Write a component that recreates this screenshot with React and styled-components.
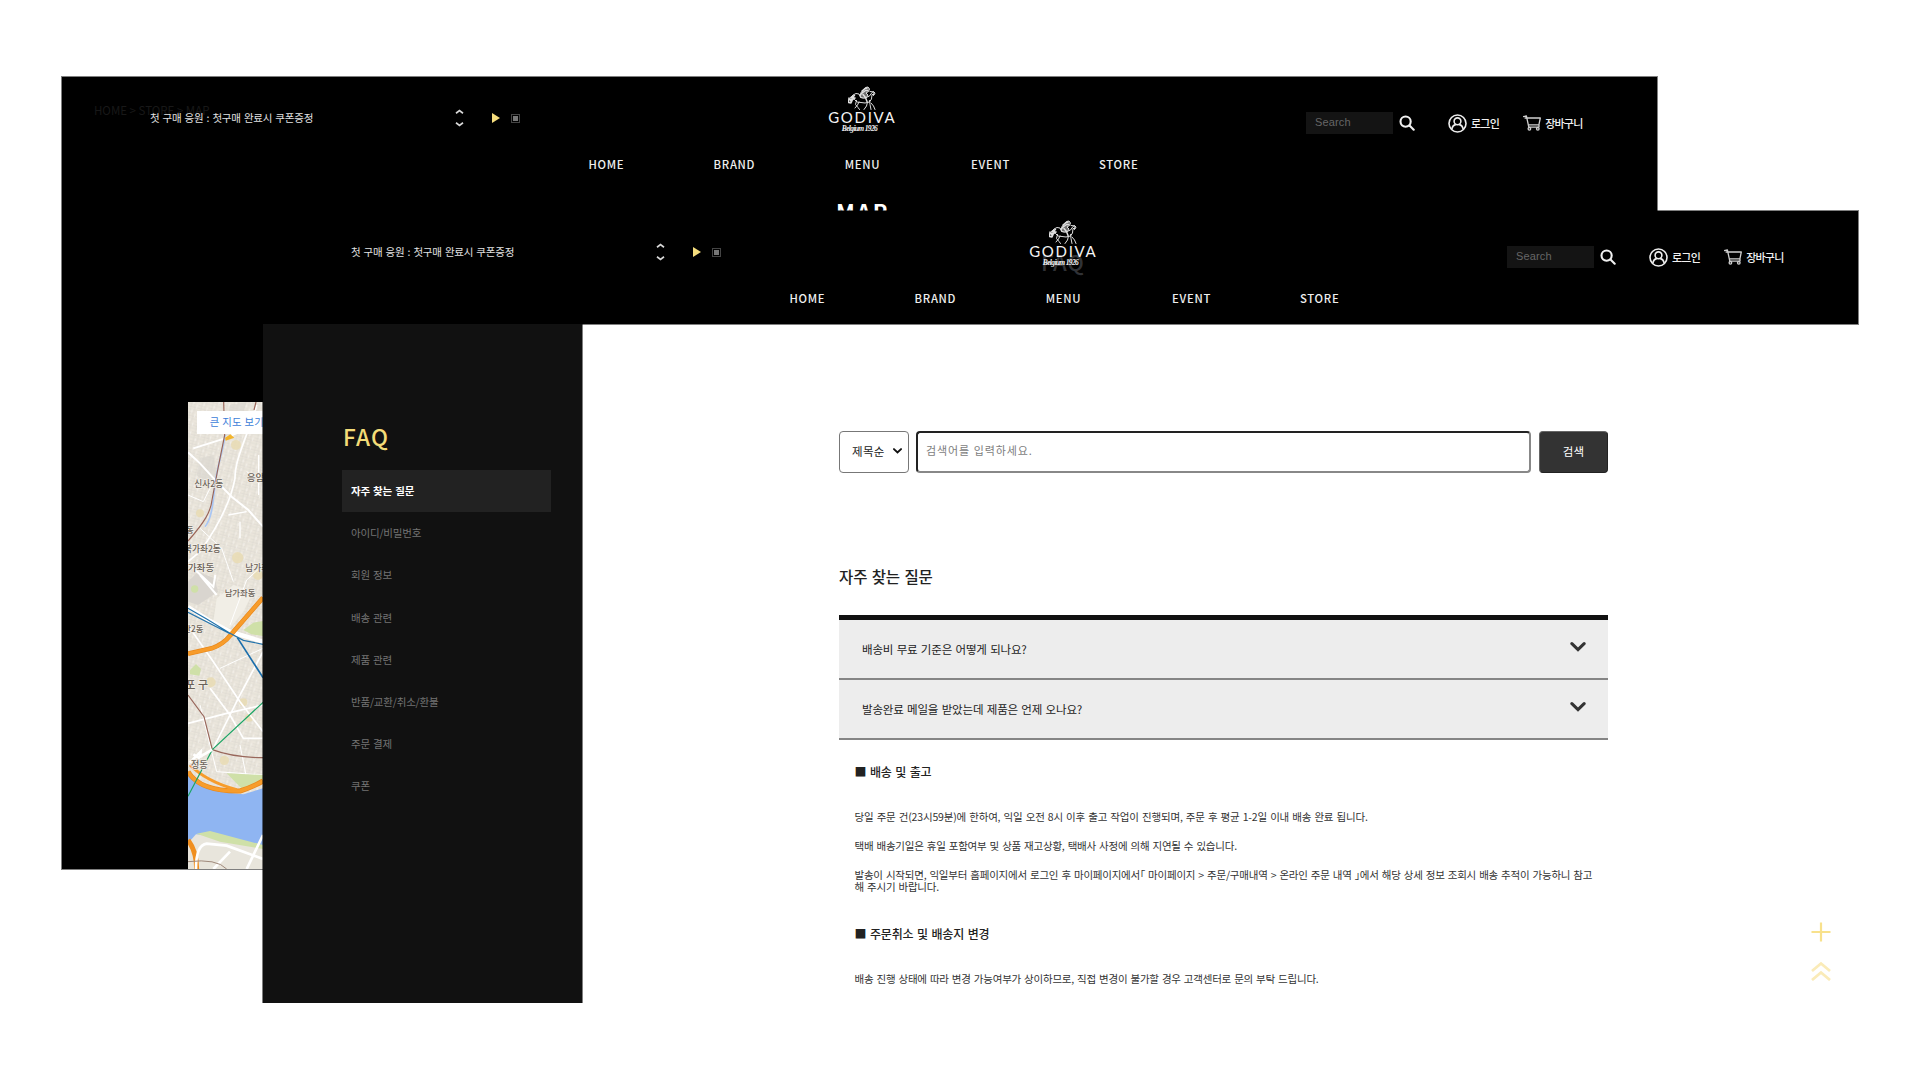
import React from "react";
import styled, { createGlobalStyle } from "styled-components";

const kr = `"Noto Sans CJK KR", "Open Sans", sans-serif`;

const Global = createGlobalStyle`
  * { box-sizing: border-box; }
  html, body { margin: 0; padding: 0; background: #fff; }
  body { font-family: ${kr}; overflow: hidden; }
  h1, h2, h3, p, ul { margin: 0; padding: 0; font-weight: inherit; }
  ul { list-style: none; }
`;

const Desktop = styled.div`
  position: relative;
  width: 1920px;
  height: 1080px;
  overflow: hidden;
  background: #fff;
`;

const Window = styled.section`
  position: absolute;
  left: ${(p) => p.$left}px;
  top: ${(p) => p.$top}px;
  width: 1595px;
  height: 792px;
  display: flex;
  flex-direction: column;
  background: ${(p) => p.$bg};
  box-shadow: ${(p) => (p.$edge ? "0 0 0 1px rgba(0,0,0,.5)" : "none")};
`;

/* ---------- site header ---------- */
const HeaderBar = styled.header`
  position: relative;
  flex: none;
  height: 113px;
  display: flex;
  flex-direction: column;
  background: #000;
  box-shadow: ${(p) => (p.$edge ? "0 0 0 1px rgba(0,0,0,.5)" : "none")};
`;

const TopRow = styled.div`
  position: relative;
  z-index: 1;
  display: flex;
  height: 75px;
`;

const Notice = styled.div`
  width: 743px;
  height: 82px;
  padding-left: 88px;
  display: flex;
  align-items: center;
`;

const NoticeText = styled.span`
  width: 305px;
  font-size: 10.5px;
  line-height: 16px;
  letter-spacing: -0.22px;
  word-spacing: 1px;
  color: #e2e2e2;
  white-space: nowrap;
`;

const Arrows = styled.div`
  width: 9px;
  margin-right: 28px;
  display: flex;
  flex-direction: column;
  gap: 8px;
  svg { display: block; }
`;

const Play = styled.i`
  width: 8px;
  height: 10px;
  margin-right: 11px;
  background: #f5dd7d;
  clip-path: polygon(0 0, 100% 50%, 0 100%);
`;

const Stop = styled.i`
  width: 9px;
  height: 9px;
  border: 1px solid #444;
  background: #777;
  background-clip: content-box;
  padding: 1px;
`;

const LogoBox = styled.div`
  width: 113px;
  padding-top: 9px;
  display: flex;
  flex-direction: column;
  align-items: center;
  color: #f4f4f4;
  svg { display: block; }
`;

const LogoName = styled.span`
  font: 400 15px/12px Lato, sans-serif;
  letter-spacing: 1.7px;
  margin: 0 -1.7px 0 0;
`;

const LogoSub = styled.span`
  font: italic 700 7.5px/8px "Liberation Serif", serif;
  letter-spacing: -0.65px;
  margin: 2px 4px 0 0;
`;

const Tools = styled.div`
  height: 92px;
  padding-left: 388px;
  display: flex;
  align-items: center;
  color: #f0f0f0;
  svg { display: block; flex: none; }
`;

const SearchField = styled.div`
  width: 87px;
  height: 22px;
  padding-left: 9px;
  margin-right: 6px;
  background: #141414;
  color: #666;
  font: 11px/20px "Liberation Sans", sans-serif;
  letter-spacing: 0.15px;
`;

const ToolLink = styled.span`
  display: flex;
  align-items: center;
  margin-left: ${(p) => p.$gap}px;
  font-size: 11px;
  font-weight: 500;
  line-height: 16px;
  letter-spacing: -0.75px;
  gap: 4px;
  white-space: nowrap;
`;

const Nav = styled.nav`
  display: flex;
  justify-content: center;
  padding-left: 6px;
  a {
    width: 128.1px;
    text-align: center;
    font: 500 11.3px/24px ${kr};
    letter-spacing: 0.7px;
    color: #efefef;
  }
`;

const GhostTitle = styled.span`
  position: absolute;
  left: ${(p) => p.$x}px;
  top: ${(p) => p.$y}px;
  font: ${(p) => p.$font} ${kr};
  letter-spacing: ${(p) => p.$ls || 0}px;
  color: ${(p) => p.$color};
  white-space: nowrap;
`;

function Horse() {
  return (
    <svg width="28" height="25" viewBox="0 0 56 50" fill="none" stroke="#dedede" strokeWidth="2" strokeLinecap="round" strokeLinejoin="round">
      <path d="M3 26l7-8 6-3 6 1 3 7 9 1 9-4 5-7 3-2 3 3-1 3-5 0-1 9-4 6-9 2-8-1-8-1-5-5" />
      <path d="M2 24l-1 9 5 1 3-7 5-3-8-1 7-4M5 30l6-9M4 27l5-2" strokeWidth="3" />
      <path d="M17 29l-2 8 5 6 3 4M22 32l-3 6-5 6M43 29l1 8 2 10M39 32l-2 8-5 7M46 34l5 6 3 7" />
      <path d="M25 22l1-9 5-5 4-5 5-1 3 4-2 5-5 3 4 4-3 5-6 1z" fill="#6f6f6f" />
      <path d="M28 10l6-5 4-1M27 15l8-6 4 0M24 18l5-5M30 17l5 6 3 8" strokeWidth="3" />
      <path d="M44 11l8 1-1 7" />
    </svg>
  );
}

function Caret({ up }) {
  return (
    <svg width="9" height="5" viewBox="0 0 9 5" fill="none" stroke="#d8d8d8" strokeWidth="1.7">
      <path d={up ? "M1 4.2L4.5 1.6 8 4.2" : "M1 .8L4.5 3.4 8 .8"} />
    </svg>
  );
}

function Header({ edge, children }) {
  return (
    <HeaderBar $edge={edge}>
      {children}
      <TopRow>
        <Notice>
          <NoticeText>첫 구매 응원 : 첫구매 완료시 쿠폰증정</NoticeText>
          <Arrows><Caret up /><Caret /></Arrows>
          <Play />
          <Stop />
        </Notice>
        <LogoBox>
          <Horse />
          <LogoName>GODIVA</LogoName>
          <LogoSub>Belgium 1926</LogoSub>
        </LogoBox>
        <Tools>
          <SearchField>Search</SearchField>
          <svg width="16" height="16" viewBox="0 0 16 16" fill="none" stroke="#f0f0f0" strokeWidth="2.1" strokeLinecap="round">
            <circle cx="6.6" cy="6.6" r="5.1" />
            <path d="M10.5 10.5l4.2 4.2" />
          </svg>
          <ToolLink $gap={33}>
            <svg width="19" height="19" viewBox="0 0 19 19" fill="none" stroke="#ededed" strokeWidth="1.6">
              <circle cx="9.5" cy="9.5" r="8.5" />
              <circle cx="9.5" cy="7.3" r="3.4" />
              <path d="M3.8 15.4c.5-3 2.4-4.6 4-4.8M15.2 15.4c-.5-3-2.4-4.6-4-4.8" />
            </svg>
            로그인
          </ToolLink>
          <ToolLink $gap={24}>
            <svg width="18" height="16" viewBox="0 0 18 16" fill="none" stroke="#cfcfcf" strokeWidth="1.3" strokeLinejoin="round">
              <path d="M0 1.6l3.4-.6 2.4 11.2H16M1.6 3H17.3l-1.4 6.8H5.4M16 9.8v2.4" />
              <circle cx="6.4" cy="13.8" r="1.3" />
              <circle cx="14.8" cy="13.8" r="1.3" />
            </svg>
            장바구니
          </ToolLink>
        </Tools>
      </TopRow>
      <Nav>
        {["HOME", "BRAND", "MENU", "EVENT", "STORE"].map((n) => <a key={n}>{n}</a>)}
      </Nav>
    </HeaderBar>
  );
}

/* ---------- store map window ---------- */
const MapPage = styled.div`
  flex: 1;
  display: flex;
  flex-direction: column;
  padding-left: 126px;
`;

const MapTitle = styled.h1`
  height: 212px;
  padding: 6px 0 0 648px;
  font: 700 22px/30px ${kr};
  letter-spacing: 2px;
  color: #fff;
`;

const MapSvg = styled.svg`
  display: block;
  width: 75px;
  height: 467px;
  font-family: ${kr};
`;

function CityMap() {
  return (
    <MapSvg viewBox="24 21 225 1401" preserveAspectRatio="none">
      <defs>
        <pattern id="streets" width="31" height="27" patternUnits="userSpaceOnUse" patternTransform="rotate(14)">
          <rect width="31" height="27" fill="#ebe6dc" />
          <path d="M0 6H31M0 17H20M9 0V27M22 0V17M20 17V27M0 25H31" stroke="#dad6cf" strokeWidth="1.6" fill="none" />
          <path d="M15 6V17M27 17V27" stroke="#f8f6f2" strokeWidth="1.6" />
        </pattern>
      </defs>
      <rect x="24" y="21" width="225" height="1401" fill="url(#streets)" />
      <g fill="#d9d5cf">
        <path d="M60 190l40-10 10 60-30 30-30-30zM150 30l50-9-20 60-40 10z" opacity=".6" />
        <path d="M24 560l30-30 50 20 10 40-60 40-30-10z" />
      </g>
      <path d="M110 610l50-40 60 20-30 60-40 50-50-20z" fill="#f1eee6" />
      <g fill="#e9dcb4" opacity=".85">
        <circle cx="168" cy="150" r="15" /><circle cx="60" cy="355" r="12" /><circle cx="173" cy="488" r="17" />
        <circle cx="234" cy="540" r="15" /><circle cx="92" cy="862" r="15" /><circle cx="190" cy="922" r="12" />
        <circle cx="133" cy="1096" r="14" /><circle cx="207" cy="968" r="12" />
      </g>
      <g fill="#cfe0a8">
        <path d="M190 705l30-22 29-5v45l-35-5zM30 825l18-18 15 15-5 20-28-4z" />
        <circle cx="44" cy="582" r="11" />
      </g>
      <g fill="none" stroke="#fff" strokeWidth="6">
        <path d="M24 172L60 205 110 260 155 305 205 345 249 395" />
        <path d="M230 30C200 130 165 190 165 250C150 330 110 400 60 470L24 500" strokeWidth="5" />
        <path d="M40 160L135 130 190 105" />
        <path d="M24 505L100 575 106 540M60 540L110 600" />
        <path d="M30 700L100 800 180 920 249 1010M90 880L150 960 190 1030H249" strokeWidth="5" />
        <path d="M24 985L140 955 249 930M249 770L180 900 100 1060" strokeWidth="5" />
        <path d="M236 180V300M145 360L200 350M180 380V430" strokeWidth="4" />
      </g>
      <g fill="none" stroke="#fff" strokeWidth="3">
        <path d="M24 300L70 320 95 270M60 400L125 460 160 560M249 510L200 555 150 690M200 230L249 260M120 820L249 760M60 930L110 1130 249 1140M180 1050L200 1150" />
      </g>
      <path d="M135 120C130 170 110 210 104 280C98 330 95 370 75 395" fill="none" stroke="#a8c6f5" strokeWidth="5" />
      <path d="M131 21L134 120 113 225 96 315C92 350 75 380 24 438M228 21L222 45" fill="none" stroke="#9a6558" strokeWidth="3.5" />
      <path d="M24 636L90 678 150 710 249 740" fill="none" stroke="#fff" strokeWidth="13" />
      <path d="M24 776L95 760Q130 748 150 722L249 608" fill="none" stroke="#e9871a" strokeWidth="14" />
      <path d="M24 776L95 760Q130 748 150 722L249 608" fill="none" stroke="#f79c2b" strokeWidth="10" />
      <path d="M24 640L80 672 150 715 190 736 249 748M24 652L150 716" fill="none" stroke="#2474ac" strokeWidth="3.5" />
      <path d="M172 728L249 848" fill="none" stroke="#1a6dab" strokeWidth="5" />

      <path d="M24 1130L60 1165 120 1190 190 1198 249 1180V1370L140 1345 40 1330 24 1345z" fill="#8fb5f2" />
      <path d="M24 1345L48 1318 130 1325 249 1352V1422H24z" fill="#e8e5dc" />
      <path d="M50 1316L90 1308 249 1350V1362L120 1340zM140 1135l109 5v25l-60 20z" fill="#cfe0a8" />
      <path d="M24 1130Q60 1190 180 1188Q220 1175 249 1158" fill="none" stroke="#e9871a" strokeWidth="15" />
      <path d="M24 1130Q60 1190 180 1188Q220 1175 249 1158" fill="none" stroke="#f79c2b" strokeWidth="11" />
      <path d="M30 1110Q80 1160 170 1184" fill="none" stroke="#f79c2b" strokeWidth="9" />
      <path d="M24 1335Q50 1370 50 1422" fill="none" stroke="#f08f20" strokeWidth="15" />
      <path d="M48 1422Q48 1350 80 1346L140 1352 249 1392M249 1320L200 1422M150 1370L100 1422" fill="none" stroke="#fff" strokeWidth="8" />
      <path d="M24 1400Q110 1390 140 1422" fill="none" stroke="#a08a7c" strokeWidth="3" />
      <path d="M24 900L72 965 97 1064Q160 1088 249 1088" fill="none" stroke="#98665a" strokeWidth="3.5" />
      <path d="M249 922L97 1064 24 1204" fill="none" stroke="#1ba565" strokeWidth="3.5" />
      <path d="M30 1102L62 1070 60 1085 97 1064M40 1078L60 1090" fill="none" stroke="#fff" strokeWidth="8" />
      <path d="M135 128l16-10 12 10-26 9z" fill="#f3b52c" />

      <g fill="#6a6258" stroke="#f3efe8" strokeWidth="4" paintOrder="stroke" fontWeight="500">
        <text x="43" y="277" fontSize="26">신사2동</text>
        <text x="200" y="258" fontSize="29">응암동</text>
        <text x="19" y="414" fontSize="24">동</text>
        <text x="12" y="472" fontSize="26">북가좌2동</text>
        <text x="23" y="528" fontSize="29">가좌동</text>
        <text x="196" y="527" fontSize="26">남가좌</text>
        <text x="134" y="603" fontSize="25">남가좌동</text>
        <text x="10" y="710" fontSize="25">산2동</text>
        <text x="16" y="882" fontSize="33">포 구</text>
        <text x="32" y="1119" fontSize="28">정동</text>
      </g>
      <rect x="51" y="48" width="198" height="69" fill="#fff" />
      <text x="89" y="94" fontSize="31" letterSpacing="1" fill="#3b7dd8">큰 지도 보기</text>
    </MapSvg>
  );
}

/* ---------- FAQ window ---------- */
const Columns = styled.div`
  flex: 1;
  min-height: 0;
  display: flex;
`;

const Side = styled.aside`
  flex: none;
  width: 319px;
  padding: 96px 31px 0 79px;
  background: #111;
  box-shadow: 0 0 0 1px rgba(0, 0, 0, 0.5);
  clip-path: inset(0 -1px 0 -1px);
`;

const SideTitle = styled.h2`
  height: 50px;
  padding-left: 1px;
  font: 500 22.5px/33px ${kr};
  letter-spacing: 1.2px;
  color: #f3dc78;
`;

const SideItem = styled.li`
  height: 42.2px;
  padding: 0 0 1px 9px;
  display: flex;
  align-items: center;
  font-size: 10.5px;
  letter-spacing: -0.2px;
  word-spacing: 1px;
  font-weight: ${(p) => (p.$on ? 700 : 400)};
  color: ${(p) => (p.$on ? "#fff" : "#747474")};
  background: ${(p) => (p.$on ? "#222" : "transparent")};
`;

const Main = styled.main`
  width: 769px;
  margin-left: 257px;
  padding-top: 107px;
  color: #222;
`;

const SearchRow = styled.div`
  display: flex;
  height: 42px;
  justify-content: space-between;
`;

const SortSelect = styled.div`
  width: 70px;
  border: 1px solid #777;
  border-radius: 4px;
  display: flex;
  align-items: center;
  justify-content: space-between;
  padding: 0 6px 2px 12px;
  font-size: 11.5px;
  letter-spacing: 0.3px;
`;

const QueryField = styled.div`
  width: 615px;
  margin-right: 1px;
  border: 2px solid;
  border-color: #222 #888 #888 #222;
  border-radius: 4px;
  padding: 0 0 4px 8px;
  display: flex;
  align-items: center;
  font-size: 11px;
  letter-spacing: 0.88px;
  word-spacing: 0.5px;
  color: #7d7d7d;
`;

const SearchButton = styled.button`
  width: 69px;
  padding: 0 0 2px;
  border: 1px solid #222;
  border-top-color: #666;
  border-left-color: #666;
  border-radius: 4px;
  background: #333;
  color: #fff;
  font: 11.5px ${kr};
  letter-spacing: 0.2px;
`;

const SectionTitle = styled.h2`
  height: 142px;
  padding-top: 91px;
  font-size: 15.5px;
  font-weight: 500;
  line-height: 24px;
  word-spacing: 1px;
  letter-spacing: -0.1px;
  white-space: nowrap;
`;

const Questions = styled.ul`
  border-top: 5px solid #111;
`;

const Question = styled.li`
  height: 60px;
  padding: 0 22px 0 23px;
  display: flex;
  align-items: center;
  justify-content: space-between;
  background: #ededed;
  border-bottom: 2px solid #858585;
  font-size: 11.5px;
  letter-spacing: -0.17px;
  word-spacing: 1px;
  svg { display: block; margin-top: -4px; }
`;

const Answer = styled.div`
  padding: 0 16px 0 15.5px;
  word-spacing: 1px;
  p {
    font-size: 10.5px;
    line-height: 12px;
    letter-spacing: -0.23px;
    color: #333;
    margin-bottom: 17px;
    white-space: nowrap;
  }
  p:nth-of-type(1) { letter-spacing: -0.18px; }
`;

const AnswerTitle = styled.h3`
  padding-top: ${(p) => p.$top}px;
  height: ${(p) => p.$top + 49}px;
  font-size: 12px;
  font-weight: 500;
  line-height: 20px;
  letter-spacing: -0.15px;
`;

const Floating = styled.div`
  position: absolute;
  right: 27px;
  bottom: 22px;
  display: flex;
  flex-direction: column;
  align-items: center;
  gap: 19px;
  svg { display: block; }
`;

const Chevron = ({ w, h, sw, color }) => (
  <svg width={w} height={h} viewBox="0 0 14 9" fill="none" stroke={color} strokeWidth={sw} strokeLinecap="round">
    <path d="M1.5 1.5L7 6.8l5.5-5.3" />
  </svg>
);

const topics = ["자주 찾는 질문", "아이디/비밀번호", "회원 정보", "배송 관련", "제품 관련", "반품/교환/취소/환불", "주문 결제", "쿠폰"];

export default function App() {
  return (
    <>
      <Global />
      <Desktop>
        <Window $left={62} $top={77} $bg="#000" $edge>
          <Header>
            <GhostTitle $x={32} $y={24} $font="400 11.5px/18px" $color="#181818">HOME &gt; STORE &gt; MAP</GhostTitle>
          </Header>
          <MapPage>
            <MapTitle>MAP</MapTitle>
            <CityMap />
          </MapPage>
        </Window>

        <Window $left={263} $top={211} $bg="#fff">
          <Header edge>
            <GhostTitle $x={778} $y={34} $font="500 22px/32px" $ls={0.6} $color="#303236">FAQ</GhostTitle>
          </Header>
          <Columns>
            <Side>
              <SideTitle>FAQ</SideTitle>
              <ul>
                {topics.map((t, i) => <SideItem key={t} $on={i === 0}>{t}</SideItem>)}
              </ul>
            </Side>
            <Main>
              <SearchRow>
                <SortSelect>
                  제목순
                  <Chevron w={9} h={6} sw={3} color="#111" />
                </SortSelect>
                <QueryField>검색어를 입력하세요.</QueryField>
                <SearchButton>검색</SearchButton>
              </SearchRow>
              <SectionTitle>자주 찾는 질문</SectionTitle>
              <Questions>
                <Question>
                  배송비 무료 기준은 어떻게 되나요?
                  <Chevron w={16} h={10} sw={2.8} color="#333" />
                </Question>
                <Question>
                  발송완료 메일을 받았는데 제품은 언제 오나요?
                  <Chevron w={16} h={10} sw={2.8} color="#333" />
                </Question>
              </Questions>
              <Answer>
                <AnswerTitle $top={22}>■ 배송 및 출고</AnswerTitle>
                <p>당일 주문 건(23시59분)에 한하여, 익일 오전 8시 이후 출고 작업이 진행되며, 주문 후 평균 1-2일 이내 배송 완료 됩니다.</p>
                <p>택배 배송기일은 휴일 포함여부 및 상품 재고상황, 택배사 사정에 의해 지연될 수 있습니다.</p>
                <p>
                  발송이 시작되면, 익일부터 홈페이지에서 로그인 후 마이페이지에서｢ 마이페이지 &gt; 주문/구매내역 &gt; 온라인 주문 내역 ｣에서 해당 상세 정보 조회시 배송 추적이 가능하니 참고
                  <br />
                  해 주시기 바랍니다.
                </p>
                <AnswerTitle $top={14}>■ 주문취소 및 배송지 변경</AnswerTitle>
                <p>배송 진행 상태에 따라 변경 가능여부가 상이하므로, 직접 변경이 불가할 경우 고객센터로 문의 부탁 드립니다.</p>
              </Answer>
            </Main>
          </Columns>
          <Floating>
            <svg width="20" height="20" viewBox="0 0 20 20" stroke="#f8e18c" strokeWidth="2.2">
              <path d="M10 0.5V19.5M0.5 10H19.5" />
            </svg>
            <svg width="20" height="20" viewBox="0 0 20 20" fill="none" stroke="#faebb8" strokeWidth="2.8">
              <path d="M1 10L10 2.5l9 7.5M1 19l9-7.5 9 7.5" />
            </svg>
          </Floating>
        </Window>
      </Desktop>
    </>
  );
}
